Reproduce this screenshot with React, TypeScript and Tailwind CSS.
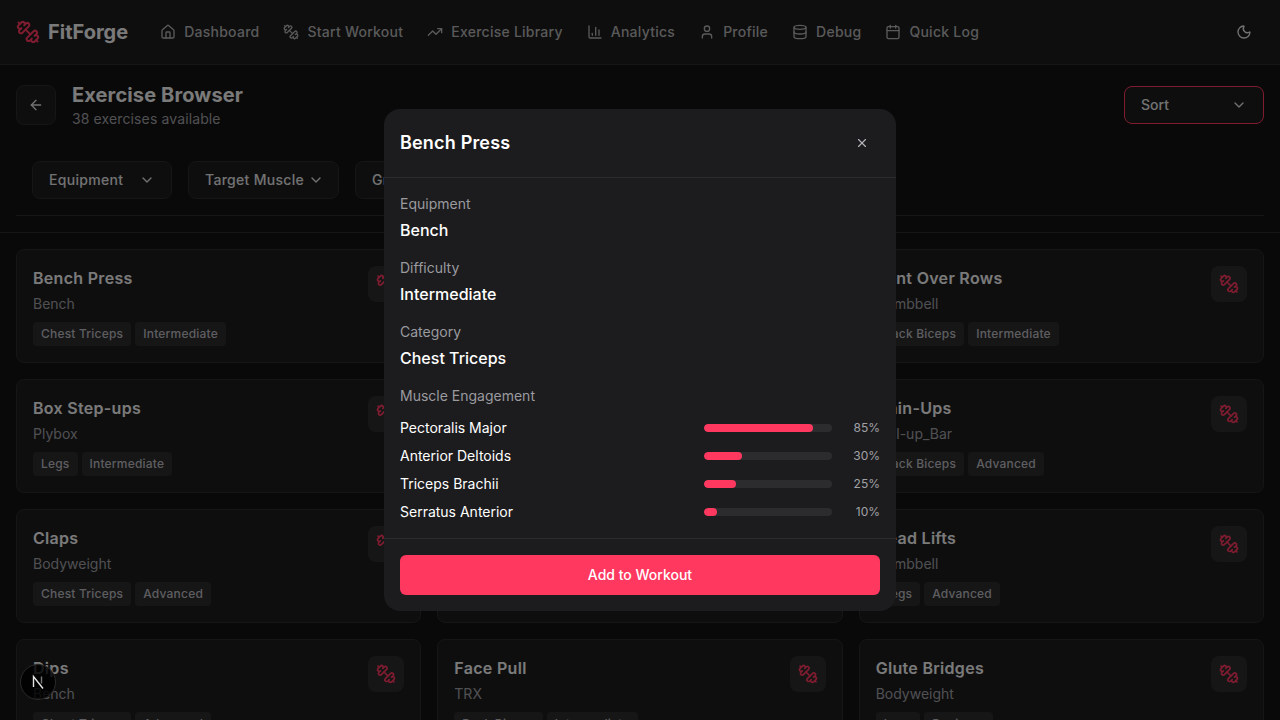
import { ArrowLeft, BarChart3, Calendar, ChevronDown, Database, Dumbbell, Home, Moon, TrendingUp, User, X } from "lucide-react";

const FlippedDumbbell = ({ size, className }: { size: number; className?: string }) => (
    <Dumbbell size={size} className={`-scale-x-100 ${className ?? ""}`} />
);

const navItems = [
    { label: "Dashboard", icon: Home },
    { label: "Start Workout", icon: FlippedDumbbell },
    { label: "Exercise Library", icon: TrendingUp },
    { label: "Analytics", icon: BarChart3 },
    { label: "Profile", icon: User },
    { label: "Debug", icon: Database },
    { label: "Quick Log", icon: Calendar },
];

const exercises = [
    { name: "Bench Press", gear: "Bench", tags: ["Chest Triceps", "Intermediate"] },
    { name: "Bent Arm Pullover", gear: "Dumbbell", tags: ["Chest Triceps", "Intermediate"] },
    { name: "Bent Over Rows", gear: "Dumbbell", tags: ["Back Biceps", "Intermediate"] },
    { name: "Box Step-ups", gear: "Plybox", tags: ["Legs", "Intermediate"] },
    { name: "Calf Raises", gear: "Bodyweight", tags: ["Legs", "Beginner"] },
    { name: "Chin-Ups", gear: "Pull-up_Bar", tags: ["Back Biceps", "Advanced"] },
    { name: "Claps", gear: "Bodyweight", tags: ["Chest Triceps", "Advanced"] },
    { name: "Crunches", gear: "Bodyweight", tags: ["Core", "Beginner"] },
    { name: "Dead Lifts", gear: "Dumbbell", tags: ["Legs", "Advanced"] },
    { name: "Dips", gear: "Bench", tags: ["Chest Triceps", "Advanced"] },
    { name: "Face Pull", gear: "TRX", tags: ["Back Biceps", "Intermediate"] },
    { name: "Glute Bridges", gear: "Bodyweight", tags: ["Legs", "Beginner"] },
];

const muscles = [
    { name: "Pectoralis Major", value: 85 },
    { name: "Anterior Deltoids", value: 30 },
    { name: "Triceps Brachii", value: 25 },
    { name: "Serratus Anterior", value: 10 },
];

const details = [
    { label: "Equipment", value: "Bench" },
    { label: "Difficulty", value: "Intermediate" },
    { label: "Category", value: "Chest Triceps" },
];

const FilterButton = ({ label, wide }: { label: string; wide?: boolean }) => (
    <button className={`flex h-[38px] items-center justify-between gap-1 whitespace-nowrap rounded-lg border border-[#2c2c2e] bg-[#1c1c1e] px-4 text-sm font-medium tracking-[0.3px] text-[#e5e5e5] ${wide ? "w-[151px]" : "w-[140px]"}`}>
        {label}
        <ChevronDown size={16} className="shrink-0" />
    </button>
);

const ExerciseCard = ({ name, gear, tags }: { name: string; gear: string; tags: string[] }) => (
    <div className="flex justify-between rounded-lg border border-[#2c2c2e] bg-[#1c1c1e] p-4">
        <div>
            <h3 className="text-base font-semibold tracking-[0.3px] text-[#f5f5f5]">{name}</h3>
            <p className="mt-1 text-sm text-[#a1a1a6]">{gear}</p>
            <div className="mt-2 flex gap-1">
                {tags.map((tag) => (
                    <span key={tag} className="rounded bg-[#2c2c2e] px-2 py-1 text-xs font-medium tracking-[0.2px] text-[#bcbcc0]">
                        {tag}
                    </span>
                ))}
            </div>
        </div>
        <div className="flex h-9 w-9 items-center justify-center rounded-lg bg-[#2c2c2e]">
            <FlippedDumbbell size={20} className="text-[#ff3860]" />
        </div>
    </div>
);

const ExerciseModal = () => (
    <div className="absolute inset-0 flex items-center justify-center bg-black/50">
        <div className="w-[512px] rounded-2xl bg-[#1c1c1e]">
            <div className="flex items-center justify-between border-b border-[#2c2c2e] p-4">
                <h2 className="text-lg font-semibold tracking-[0.18px] text-white">Bench Press</h2>
                <button className="flex h-9 w-9 items-center justify-center text-[#b4b4b8]">
                    <X size={14} />
                </button>
            </div>
            <div className="flex flex-col gap-4 p-4">
                {details.map((item) => (
                    <div key={item.label}>
                        <div className="text-sm text-[#9a9a9f]">{item.label}</div>
                        <div className="mt-1 text-base font-medium text-white">{item.value}</div>
                    </div>
                ))}
                <div>
                    <div className="text-sm text-[#9a9a9f]">Muscle Engagement</div>
                    <div className="mt-3 flex flex-col gap-2">
                        {muscles.map((muscle) => (
                            <div key={muscle.name} className="flex items-center justify-between">
                                <span className="text-sm text-white">{muscle.name}</span>
                                <div className="flex items-center">
                                    <div className="h-2 w-32 overflow-hidden rounded-full bg-[#2c2c2e]">
                                        <div className="h-full rounded-full bg-[#ff3860]" style={{ width: `${muscle.value}%` }} />
                                    </div>
                                    <span className="w-12 text-right text-xs text-[#a1a1a6]">{muscle.value}%</span>
                                </div>
                            </div>
                        ))}
                    </div>
                </div>
            </div>
            <div className="border-t border-[#2c2c2e] p-4">
                <button className="h-10 w-full rounded-md bg-[#ff3860] text-sm font-medium text-white">
                    Add to Workout
                </button>
            </div>
        </div>
    </div>
);

export default function App() {
    return (
        <div className="relative h-screen overflow-hidden bg-[#121212] font-['Inter',sans-serif]">
            <header className="flex h-[65px] items-center justify-between border-b border-[#2c2c2e] bg-[#1c1c1e] px-4">
                <div className="flex items-center">
                    <div className="flex items-center gap-2">
                        <FlippedDumbbell size={24} className="text-[#ff3860]" />
                        <span className="text-xl font-bold text-[#f5f5f5]">FitForge</span>
                    </div>
                    <nav className="ml-8 flex items-center gap-6">
                        {navItems.map((item) => (
                            <a key={item.label} className="flex items-center gap-2 text-sm font-medium tracking-[0.25px] text-[#b4b4b4]">
                                <item.icon size={16} />
                                {item.label}
                            </a>
                        ))}
                    </nav>
                </div>
                <button className="flex h-9 w-10 items-center justify-center text-[#e5e5e5]">
                    <Moon size={16} />
                </button>
            </header>

            <section className="border-b border-[#2c2c2e] p-4">
                <div className="flex items-center justify-between">
                    <div className="flex items-center gap-4">
                        <button className="flex h-10 w-10 items-center justify-center rounded-lg border border-[#2c2c2e] bg-[#1c1c1e] text-[#e5e5e5]">
                            <ArrowLeft size={16} />
                        </button>
                        <div>
                            <h1 className="text-xl font-bold tracking-[0.12px] text-[#f5f5f5]">Exercise Browser</h1>
                            <p className="text-sm tracking-[0.12px] text-[#a1a1a6]">38 exercises available</p>
                        </div>
                    </div>
                    <button className="flex h-[38px] w-[140px] items-center justify-between rounded-lg border border-[#ff3860] bg-[#1c1c1e] px-4 text-sm font-medium text-[#e5e5e5]">
                        Sort
                        <ChevronDown size={16} />
                    </button>
                </div>
                <div className="mt-8 flex gap-4 border-b border-[#2c2c2e] px-4 pb-4">
                    <FilterButton label="Equipment" />
                    <FilterButton label="Target Muscle" wide />
                    <FilterButton label="Group" />
                </div>
            </section>

            <main className="grid grid-cols-3 gap-4 p-4">
                {exercises.map((exercise) => (
                    <ExerciseCard key={exercise.name} {...exercise} />
                ))}
            </main>

            <ExerciseModal />

            <div className="absolute bottom-5 left-5 flex h-9 w-9 items-center justify-center rounded-full border border-[#2a2a2a] bg-black/80">
                <svg width="18" height="18" viewBox="0 0 18 18" fill="none">
                    <path d="M4.5 14V3.5L14 15.5" stroke="#e5e5e5" strokeWidth="1.4" />
                    <path d="M12.5 3.5v7" stroke="#777" strokeWidth="1.4" />
                </svg>
            </div>
        </div>
    );
}
